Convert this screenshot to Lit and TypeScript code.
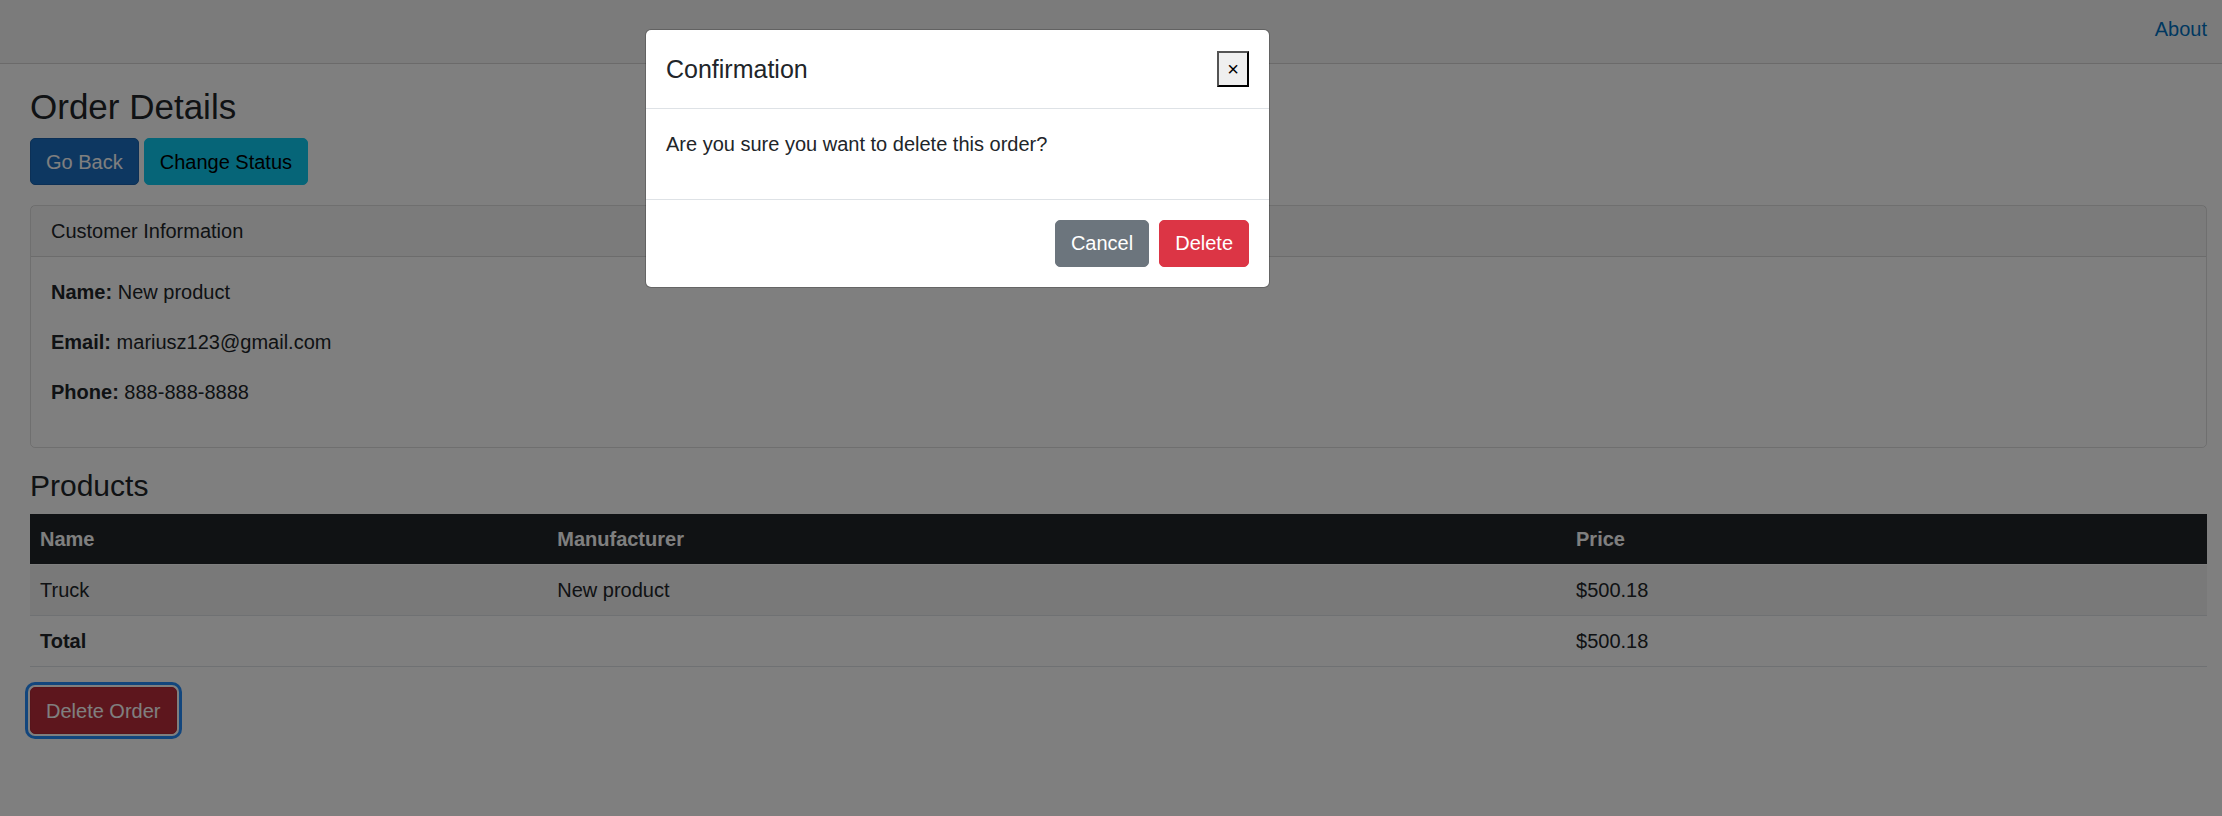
import { LitElement, html, css } from "lit";
import { customElement, state } from "lit/decorators.js";

interface Product {
  name: string;
  manufacturer: string;
  price: number;
}

const money = (value: number) => `$${value.toFixed(2)}`;

@customElement("app-root")
export class AppRoot extends LitElement {
  @state() private confirming = true;

  private customer = [
    { label: "Name", value: "New product" },
    { label: "Email", value: "mariusz123@gmail.com" },
    { label: "Phone", value: "888-888-8888" },
  ];

  private products: Product[] = [
    { name: "Truck", manufacturer: "New product", price: 500.18 },
  ];

  static styles = css`
    :host {
      display: block;
      position: relative;
      min-height: 100vh;
      background: #fff;
      color: #212529;
      font: 400 20px/30px "Liberation Sans", Arial, sans-serif;
    }
    * {
      box-sizing: border-box;
    }
    h1, h2, h3, p {
      margin: 0;
      font-weight: 400;
    }
    .top-row {
      display: flex;
      justify-content: flex-end;
      padding: 14px 15px 19px;
      background: #f7f7f7;
      border-bottom: 1px solid #d6d5d5;
    }
    .top-row a {
      color: #0071c1;
      text-decoration: none;
    }
    .content {
      padding: 22px 15px 30px 30px;
    }
    .title {
      margin-bottom: 10px;
      font-size: 35px;
      line-height: 42px;
    }
    .subtitle {
      margin-bottom: 10px;
      font-size: 30px;
      line-height: 36px;
    }
    .actions {
      display: flex;
      gap: 5px;
      margin-bottom: 20px;
    }
    .btn {
      padding: 8px 15px 7px;
      border: 1px solid transparent;
      border-radius: 5px;
      font: inherit;
      color: #fff;
      cursor: pointer;
    }
    .primary {
      background: #1b6ec2;
      border-color: #1861ac;
    }
    .info {
      background: #0dcaf0;
      border-color: #0dcaf0;
      color: #000;
    }
    .secondary {
      background: #6c757d;
      border-color: #6c757d;
    }
    .danger {
      background: #dc3545;
      border-color: #dc3545;
    }
    .focused {
      background: #bb2d3b;
      border-color: #b02a37;
      box-shadow: 0 0 0 2px #fff, 0 0 0 5px #258cfb;
      outline: none;
    }
    .card {
      margin-bottom: 20px;
      border: 1px solid rgba(0, 0, 0, 0.125);
      border-radius: 5px;
    }
    .card-header {
      padding: 10px 20px;
      background: rgba(0, 0, 0, 0.03);
      border-bottom: 1px solid rgba(0, 0, 0, 0.125);
    }
    .card-body {
      padding: 20px;
    }
    .card-body p,
    .modal-body p {
      margin-bottom: 20px;
    }
    .products {
      width: 100%;
      margin-bottom: 20px;
      border-collapse: collapse;
      text-align: left;
    }
    .products th,
    .products td {
      padding: 10px;
      border-bottom: 1px solid #dee2e6;
    }
    .products thead th {
      background: #212529;
      background-clip: padding-box;
      border-bottom-color: #fff;
      color: #fff;
    }
    .products .striped {
      background: #f2f2f2;
    }
    .backdrop {
      position: absolute;
      inset: 0;
      display: flex;
      justify-content: center;
      align-items: flex-start;
      padding: 29px 307px 29px 0;
      background: rgba(0, 0, 0, 0.5);
    }
    .modal {
      width: 100%;
      max-width: 625px;
      background: #fff;
      background-clip: padding-box;
      border: 1px solid rgba(0, 0, 0, 0.2);
      border-radius: 6px;
    }
    .modal-header {
      display: flex;
      justify-content: space-between;
      align-items: center;
      padding: 20px;
      border-bottom: 1px solid #dee2e6;
    }
    .modal-title {
      font-size: 25px;
      line-height: 38px;
    }
    .close {
      padding: 1px 8px;
      border: 2px outset #000;
      background: #efefef;
      color: #000;
      font: inherit;
    }
    .modal-body {
      padding: 20px;
    }
    .modal-footer {
      display: flex;
      justify-content: flex-end;
      gap: 10px;
      padding: 20px;
      border-top: 1px solid #dee2e6;
    }
    .modal-footer .btn {
      padding: 7px 15px 8px;
    }
    @media (max-width: 1200px) {
      .backdrop {
        padding: 29px 15px;
      }
    }
  `;

  private open() {
    this.confirming = true;
  }

  private close() {
    this.confirming = false;
  }

  private renderModal() {
    return html`
      <div class="backdrop">
        <div class="modal" role="dialog" aria-modal="true" aria-labelledby="modal-title">
          <div class="modal-header">
            <h3 class="modal-title" id="modal-title">Confirmation</h3>
            <button class="close" type="button" aria-label="Close" @click=${this.close}>×</button>
          </div>
          <div class="modal-body">
            <p>Are you sure you want to delete this order?</p>
          </div>
          <div class="modal-footer">
            <button class="btn secondary" type="button" @click=${this.close}>Cancel</button>
            <button class="btn danger" type="button" @click=${this.close}>Delete</button>
          </div>
        </div>
      </div>
    `;
  }

  render() {
    const total = this.products.reduce((sum, p) => sum + p.price, 0);
    return html`
      <header class="top-row"><a href="#about">About</a></header>
      <main class="content">
        <h1 class="title">Order Details</h1>
        <div class="actions">
          <button class="btn primary" type="button">Go Back</button>
          <button class="btn info" type="button">Change Status</button>
        </div>
        <section class="card">
          <div class="card-header">Customer Information</div>
          <div class="card-body">
            ${this.customer.map((c) => html`<p><strong>${c.label}:</strong> ${c.value}</p>`)}
          </div>
        </section>
        <h2 class="subtitle">Products</h2>
        <table class="products">
          <thead>
            <tr>
              <th scope="col">Name</th>
              <th scope="col">Manufacturer</th>
              <th scope="col">Price</th>
            </tr>
          </thead>
          <tbody>
            ${this.products.map(
              (p) => html`<tr class="striped">
                <td>${p.name}</td>
                <td>${p.manufacturer}</td>
                <td>${money(p.price)}</td>
              </tr>`
            )}
            <tr>
              <th scope="row">Total</th>
              <td></td>
              <td>${money(total)}</td>
            </tr>
          </tbody>
        </table>
        <button class="btn danger focused" type="button" @click=${this.open}>Delete Order</button>
      </main>
      ${this.confirming ? this.renderModal() : null}
    `;
  }
}
